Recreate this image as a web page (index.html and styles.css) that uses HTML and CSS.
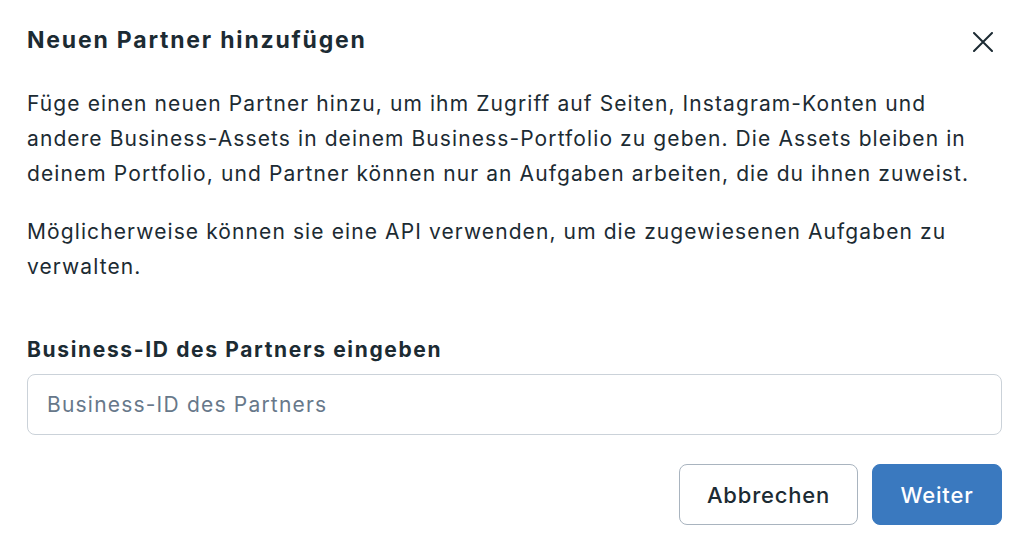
FILE: index.html
```html
<!DOCTYPE html>
<html lang="de">
<head>
<meta charset="utf-8">
<title>Neuen Partner hinzufügen</title>
<link rel="stylesheet" href="styles.css">
</head>
<body>
<div class="dialog">
  <div class="header">
    <h1 class="title">Neuen Partner hinzufügen</h1>
    <button class="close" aria-label="Schließen">
      <svg width="20" height="20" viewBox="0 0 20 20"><path d="M1 1 L19 19 M19 1 L1 19" stroke="#1c2b33" stroke-width="2" stroke-linecap="round" fill="none"/></svg>
    </button>
  </div>
  <p class="text">Füge einen neuen Partner hinzu, um ihm Zugriff auf Seiten, Instagram-Konten und andere Business-Assets in deinem Business-Portfolio zu geben. Die Assets bleiben in deinem Portfolio, und Partner können nur an Aufgaben arbeiten, die du ihnen zuweist.</p>
  <p class="text second">Möglicherweise können sie eine API verwenden, um die zugewiesenen Aufgaben zu verwalten.</p>
  <label class="label" for="bid">Business-ID des Partners eingeben</label>
  <input class="input" id="bid" type="text" placeholder="Business-ID des Partners">
  <div class="actions">
    <button class="btn btn-secondary">Abbrechen</button>
    <button class="btn btn-primary">Weiter</button>
  </div>
</div>
</body>
</html>
```
FILE: styles.css
```css
* { box-sizing: border-box; }
html, body { margin: 0; padding: 0; background: #fff; }
body {
  font-family: Inter, "Noto Sans", "Liberation Sans", sans-serif;
  color: #1c2b33;
}
.dialog {
  width: 1024px;
  height: 546px;
  padding: 26px 22px 21px 27px;
  display: flex;
  flex-direction: column;
}
.header {
  display: flex;
  justify-content: space-between;
  align-items: center;
  height: 28px;
}
.title {
  margin: 0;
  font-size: 23px;
  line-height: 28px;
  font-weight: 700;
  letter-spacing: 1.8px;
}
.close {
  border: 0;
  background: none;
  padding: 0;
  width: 20px;
  height: 20px;
  margin-right: 9px;
  margin-top: 3px;
  display: flex;
}
.text {
  margin: 32px 0 0;
  font-size: 21px;
  line-height: 35px;
  letter-spacing: 1.1px;
  width: 958px;
}
.text.second { margin-top: 23px; }
.label {
  margin-top: 54px;
  font-size: 21px;
  line-height: 24px;
  font-weight: 700;
  letter-spacing: 1.65px;
}
.input {
  margin-top: 12px;
  width: 975px;
  height: 61px;
  border: 1px solid #cbd2d9;
  border-radius: 8px;
  padding: 0 19px;
  font-family: inherit;
  font-size: 21px;
  letter-spacing: 1.2px;
  color: #1c2b33;
  outline: none;
}
.input::placeholder { color: #67788a; opacity: 1; }
.actions {
  margin-top: 29px;
  display: flex;
  justify-content: flex-end;
  gap: 14px;
}
.btn {
  height: 61px;
  padding: 0 20px;
  border-radius: 8px;
  font-family: inherit;
  font-size: 22px;
  font-weight: 500;
  letter-spacing: 0.8px;
}
.btn-secondary {
  background: #fff;
  border: 1px solid #a9b4bf;
  color: #1c2b33;
  width: 179px;
}
.btn-primary {
  background: #3a79bf;
  border: 1px solid #3a79bf;
  color: #fff;
  width: 130px;
}
```
